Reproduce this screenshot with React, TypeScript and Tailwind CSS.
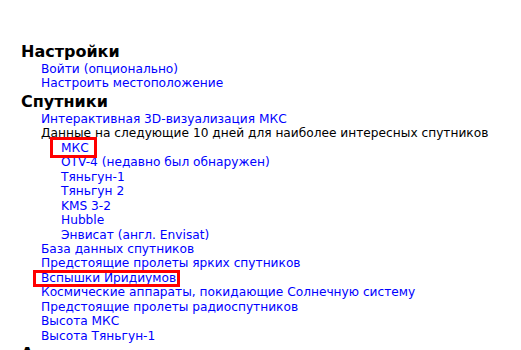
import React from 'react';

const Mark = ({ children, box }: { children: React.ReactNode; box: string }) => (
  <span className="relative inline-block">
    {children}
    <span className={'pointer-events-none absolute border-[3px] border-[#ff0000] ' + box}></span>
  </span>
);

const Link = ({ children }: { children: React.ReactNode }) => (
  <div>
    <a href="#" className="text-[#0000ff]">
      {children}
    </a>
  </div>
);

const App = () => {
  const satellites = ['OTV-4 (недавно был обнаружен)', 'Тяньгун-1', 'Тяньгун 2', 'KMS 3-2', 'Hubble', 'Энвисат (англ. Envisat)'];
  const more = [
    'Космические аппараты, покидающие Солнечную систему',
    'Предстоящие пролеты радиоспутников',
    'Высота МКС',
    'Высота Тяньгун-1',
  ];

  return (
    <div className="h-[350px] overflow-hidden bg-white pl-[21px] pt-[41px] font-['DejaVu_Sans',Verdana,sans-serif] text-[12.2px] leading-[14.45px] text-black">
      <h3 className="text-[16px] font-bold leading-[21px]">Настройки</h3>
      <div className="pl-[20px]">
        <Link>Войти (опционально)</Link>
        <Link>Настроить местоположение</Link>
      </div>

      <h3 className="text-[16px] font-bold leading-[21px]">Спутники</h3>
      <div className="pl-[20px]">
        <Link>Интерактивная 3D-визуализация МКС</Link>
        <div>Данные на следующие 10 дней для наиболее интересных спутников</div>
        <div className="pl-[20px]">
          <Link>
            <Mark box="-left-[11px] -right-[8px] -top-[4px] -bottom-[3px]">МКС</Mark>
          </Link>
          {satellites.map((s) => (
            <Link key={s}>{s}</Link>
          ))}
        </div>
        <Link>База данных спутников</Link>
        <Link>Предстоящие пролеты ярких спутников</Link>
        <Link>
          <Mark box="-left-[8px] -right-[4px] -top-[1px] -bottom-[2px]">Вспышки Иридиумов</Mark>
        </Link>
        {more.map((s) => (
          <Link key={s}>{s}</Link>
        ))}
      </div>

      <h3 className="text-[16px] font-bold leading-[21px]">Астрономия</h3>
    </div>
  );
};

export default App;
